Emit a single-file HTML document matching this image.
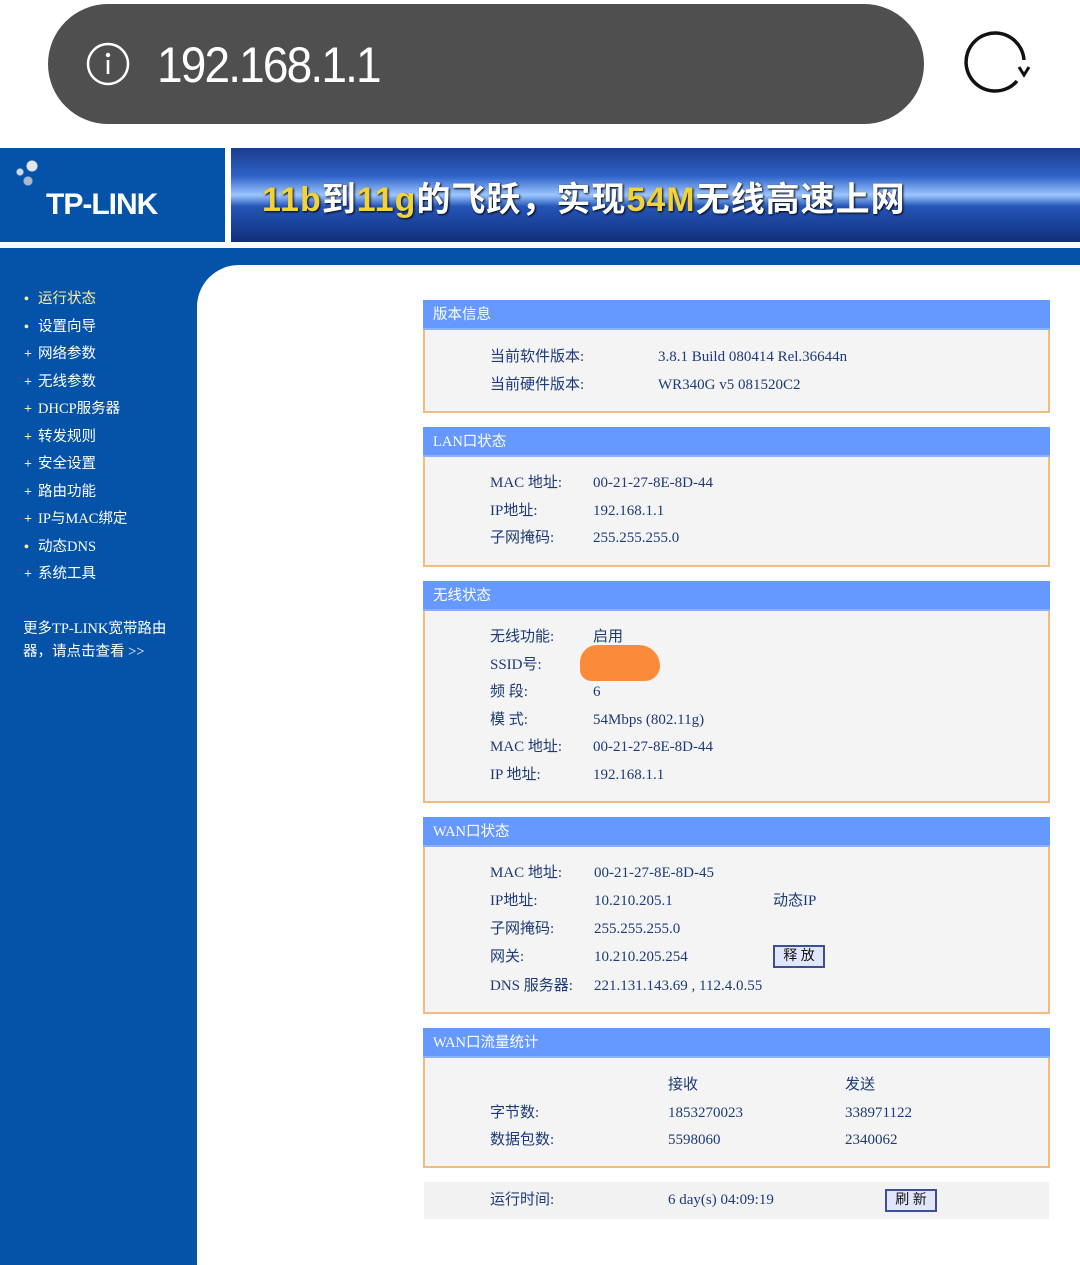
<!DOCTYPE html>
<html><head><meta charset="utf-8"><style>
*{margin:0;padding:0;box-sizing:border-box}
body{width:1080px;height:1265px;background:#fff;position:relative;overflow:hidden;font-family:"Liberation Serif","Noto Sans CJK SC",serif;color:#1c3a78}
.a{position:absolute;white-space:nowrap}
.pill{left:48px;top:4px;width:876px;height:120px;background:#4f4f4f;border-radius:60px}
.menu{left:24px;font-size:14.5px;line-height:20px;color:#fff;font-family:"Liberation Serif","Noto Sans CJK SC",serif}
.menu b{font-weight:bold;display:inline-block;width:14px;color:#ffef9a;font-size:14px}
.panel{left:423px;width:627px;background:#f4f4f4;border:2px solid #f3bb80;border-top:none}
.ph{position:absolute;left:-2px;right:-2px;top:0;height:30px;background:#6699ff;color:#fff;font-size:14.5px;line-height:20px;padding:5px 0 0 10px;font-family:"Liberation Serif","Noto Sans CJK SC",serif;border-bottom:2px solid #8ab0ff}
.t{position:absolute;font-size:15px;line-height:20px;white-space:nowrap;color:#1c3a78}
.btn{position:absolute;border:2px solid #3c4f96;background:#e2e6fb;font-size:14px;line-height:19px;text-align:center;color:#111}
</style></head><body>
<div class="a pill"></div>
<svg class="a" style="left:86px;top:42px" width="44" height="44"><circle cx="22" cy="22" r="20" fill="none" stroke="#fff" stroke-width="2.5"/><circle cx="22" cy="13" r="2.2" fill="#fff"/><rect x="20.7" y="18" width="2.6" height="14" fill="#fff"/></svg>
<div class="a" style="left:157px;top:36px;font-size:50px;color:#fff;font-family:'Liberation Sans',sans-serif;letter-spacing:-2px;transform:scaleX(0.92);transform-origin:left">192.168.1.1</div>
<svg class="a" style="left:962px;top:30px" width="70" height="70"><path d="M55 51 A29 29 0 1 1 62 30" fill="none" stroke="#111" stroke-width="3.5"/><path d="M57 37 L62 45 L67 37" fill="none" stroke="#111" stroke-width="3"/></svg>

<div class="a" style="left:0;top:148px;width:225px;height:94px;background:#0453a8"></div>
<div class="a" style="left:8px;top:160px;width:40px;height:30px;background:radial-gradient(circle at 30% 40%,#cfd8e8 0 3px,transparent 4px),radial-gradient(circle at 60% 20%,#dfe6f0 0 5px,transparent 6px),radial-gradient(circle at 50% 70%,#aab8cc 0 4px,transparent 5px)"></div>
<div class="a" style="left:46px;top:188px;font-size:30px;font-weight:bold;color:#fff;font-family:'Liberation Sans',sans-serif;letter-spacing:-1px">TP-LINK</div>
<div class="a" style="left:231px;top:148px;width:849px;height:94px;background:linear-gradient(180deg,#1a3c8c 0%,#2f63c8 30%,#9cc6ff 50%,#2556b8 62%,#102e7a 100%)"></div>
<div class="a" style="left:262px;top:172px;font-size:34px;font-weight:bold;color:#fff;font-family:'Liberation Sans','Noto Sans CJK SC',sans-serif;letter-spacing:1px;text-shadow:1px 1px 2px #000"><span style="color:#f2d23a">11b</span>到<span style="color:#f2d23a">11g</span>的飞跃，实现<span style="color:#f2d23a">54M</span>无线高速上网</div>
<div class="a" style="left:0;top:248px;width:1080px;height:17px;background:#0453a8"></div>
<div class="a" style="left:0;top:248px;width:197px;height:1017px;background:#0453a8"></div>
<div class="a" style="left:197px;top:265px;width:60px;height:60px;background:#fff;border-top-left-radius:42px"></div>
<div class="a" style="left:197px;top:265px;width:42px;height:42px;background:#0453a8;z-index:-1"></div>

<div class="a menu" style="top:289px;color:#ffefa0"><b>•</b>运行状态</div>
<div class="a menu" style="top:317px"><b>•</b>设置向导</div>
<div class="a menu" style="top:344px"><b>+</b>网络参数</div>
<div class="a menu" style="top:372px"><b>+</b>无线参数</div>
<div class="a menu" style="top:399px"><b>+</b>DHCP服务器</div>
<div class="a menu" style="top:427px"><b>+</b>转发规则</div>
<div class="a menu" style="top:454px"><b>+</b>安全设置</div>
<div class="a menu" style="top:482px"><b>+</b>路由功能</div>
<div class="a menu" style="top:509px"><b>+</b>IP与MAC绑定</div>
<div class="a menu" style="top:537px"><b>•</b>动态DNS</div>
<div class="a menu" style="top:564px"><b>+</b>系统工具</div>
<div class="a menu" style="left:23px;top:619px">更多TP-LINK宽带路由</div>
<div class="a menu" style="left:23px;top:642px">器，请点击查看 &gt;&gt;</div>

<div class="a panel" style="top:300px;height:113px"><div class="ph">版本信息</div>
<div class="t" style="left:65px;top:47px">当前软件版本:</div><div class="t" style="left:233px;top:47px">3.8.1 Build 080414 Rel.36644n</div>
<div class="t" style="left:65px;top:75px">当前硬件版本:</div><div class="t" style="left:233px;top:75px">WR340G v5 081520C2</div></div>

<div class="a panel" style="top:427px;height:140px"><div class="ph">LAN口状态</div>
<div class="t" style="left:65px;top:46px">MAC 地址:</div><div class="t" style="left:168px;top:46px">00-21-27-8E-8D-44</div>
<div class="t" style="left:65px;top:74px">IP地址:</div><div class="t" style="left:168px;top:74px">192.168.1.1</div>
<div class="t" style="left:65px;top:101px">子网掩码:</div><div class="t" style="left:168px;top:101px">255.255.255.0</div></div>

<div class="a panel" style="top:581px;height:222px"><div class="ph">无线状态</div>
<div class="t" style="left:65px;top:46px">无线功能:</div><div class="t" style="left:168px;top:46px">启用</div>
<div class="t" style="left:65px;top:74px">SSID号:</div>
<div style="position:absolute;left:155px;top:64px;width:80px;height:36px;background:#fb8a3a;border-radius:18px 22px 16px 12px"></div>
<div class="t" style="left:65px;top:101px">频 段:</div><div class="t" style="left:168px;top:101px">6</div>
<div class="t" style="left:65px;top:129px">模 式:</div><div class="t" style="left:168px;top:129px">54Mbps (802.11g)</div>
<div class="t" style="left:65px;top:156px">MAC 地址:</div><div class="t" style="left:168px;top:156px">00-21-27-8E-8D-44</div>
<div class="t" style="left:65px;top:184px">IP 地址:</div><div class="t" style="left:168px;top:184px">192.168.1.1</div></div>

<div class="a panel" style="top:817px;height:197px"><div class="ph">WAN口状态</div>
<div class="t" style="left:65px;top:46px">MAC 地址:</div><div class="t" style="left:169px;top:46px">00-21-27-8E-8D-45</div>
<div class="t" style="left:65px;top:74px">IP地址:</div><div class="t" style="left:169px;top:74px">10.210.205.1</div><div class="t" style="left:348px;top:74px">动态IP</div>
<div class="t" style="left:65px;top:102px">子网掩码:</div><div class="t" style="left:169px;top:102px">255.255.255.0</div>
<div class="t" style="left:65px;top:130px">网关:</div><div class="t" style="left:169px;top:130px">10.210.205.254</div>
<div class="btn" style="left:348px;top:128px;width:52px;height:23px">释 放</div>
<div class="t" style="left:65px;top:159px">DNS 服务器:</div><div class="t" style="left:169px;top:159px">221.131.143.69 , 112.4.0.55</div></div>

<div class="a panel" style="top:1028px;height:140px"><div class="ph">WAN口流量统计</div>
<div class="t" style="left:243px;top:47px">接收</div><div class="t" style="left:420px;top:47px">发送</div>
<div class="t" style="left:65px;top:75px">字节数:</div><div class="t" style="left:243px;top:75px">1853270023</div><div class="t" style="left:420px;top:75px">338971122</div>
<div class="t" style="left:65px;top:102px">数据包数:</div><div class="t" style="left:243px;top:102px">5598060</div><div class="t" style="left:420px;top:102px">2340062</div></div>

<div class="a" style="left:424px;top:1182px;width:625px;height:37px;background:#f2f2f2">
<div class="t" style="left:66px;top:8px">运行时间:</div><div class="t" style="left:244px;top:8px">6 day(s) 04:09:19</div>
<div class="btn" style="left:461px;top:7px;width:52px;height:23px">刷 新</div></div>
</body></html>
